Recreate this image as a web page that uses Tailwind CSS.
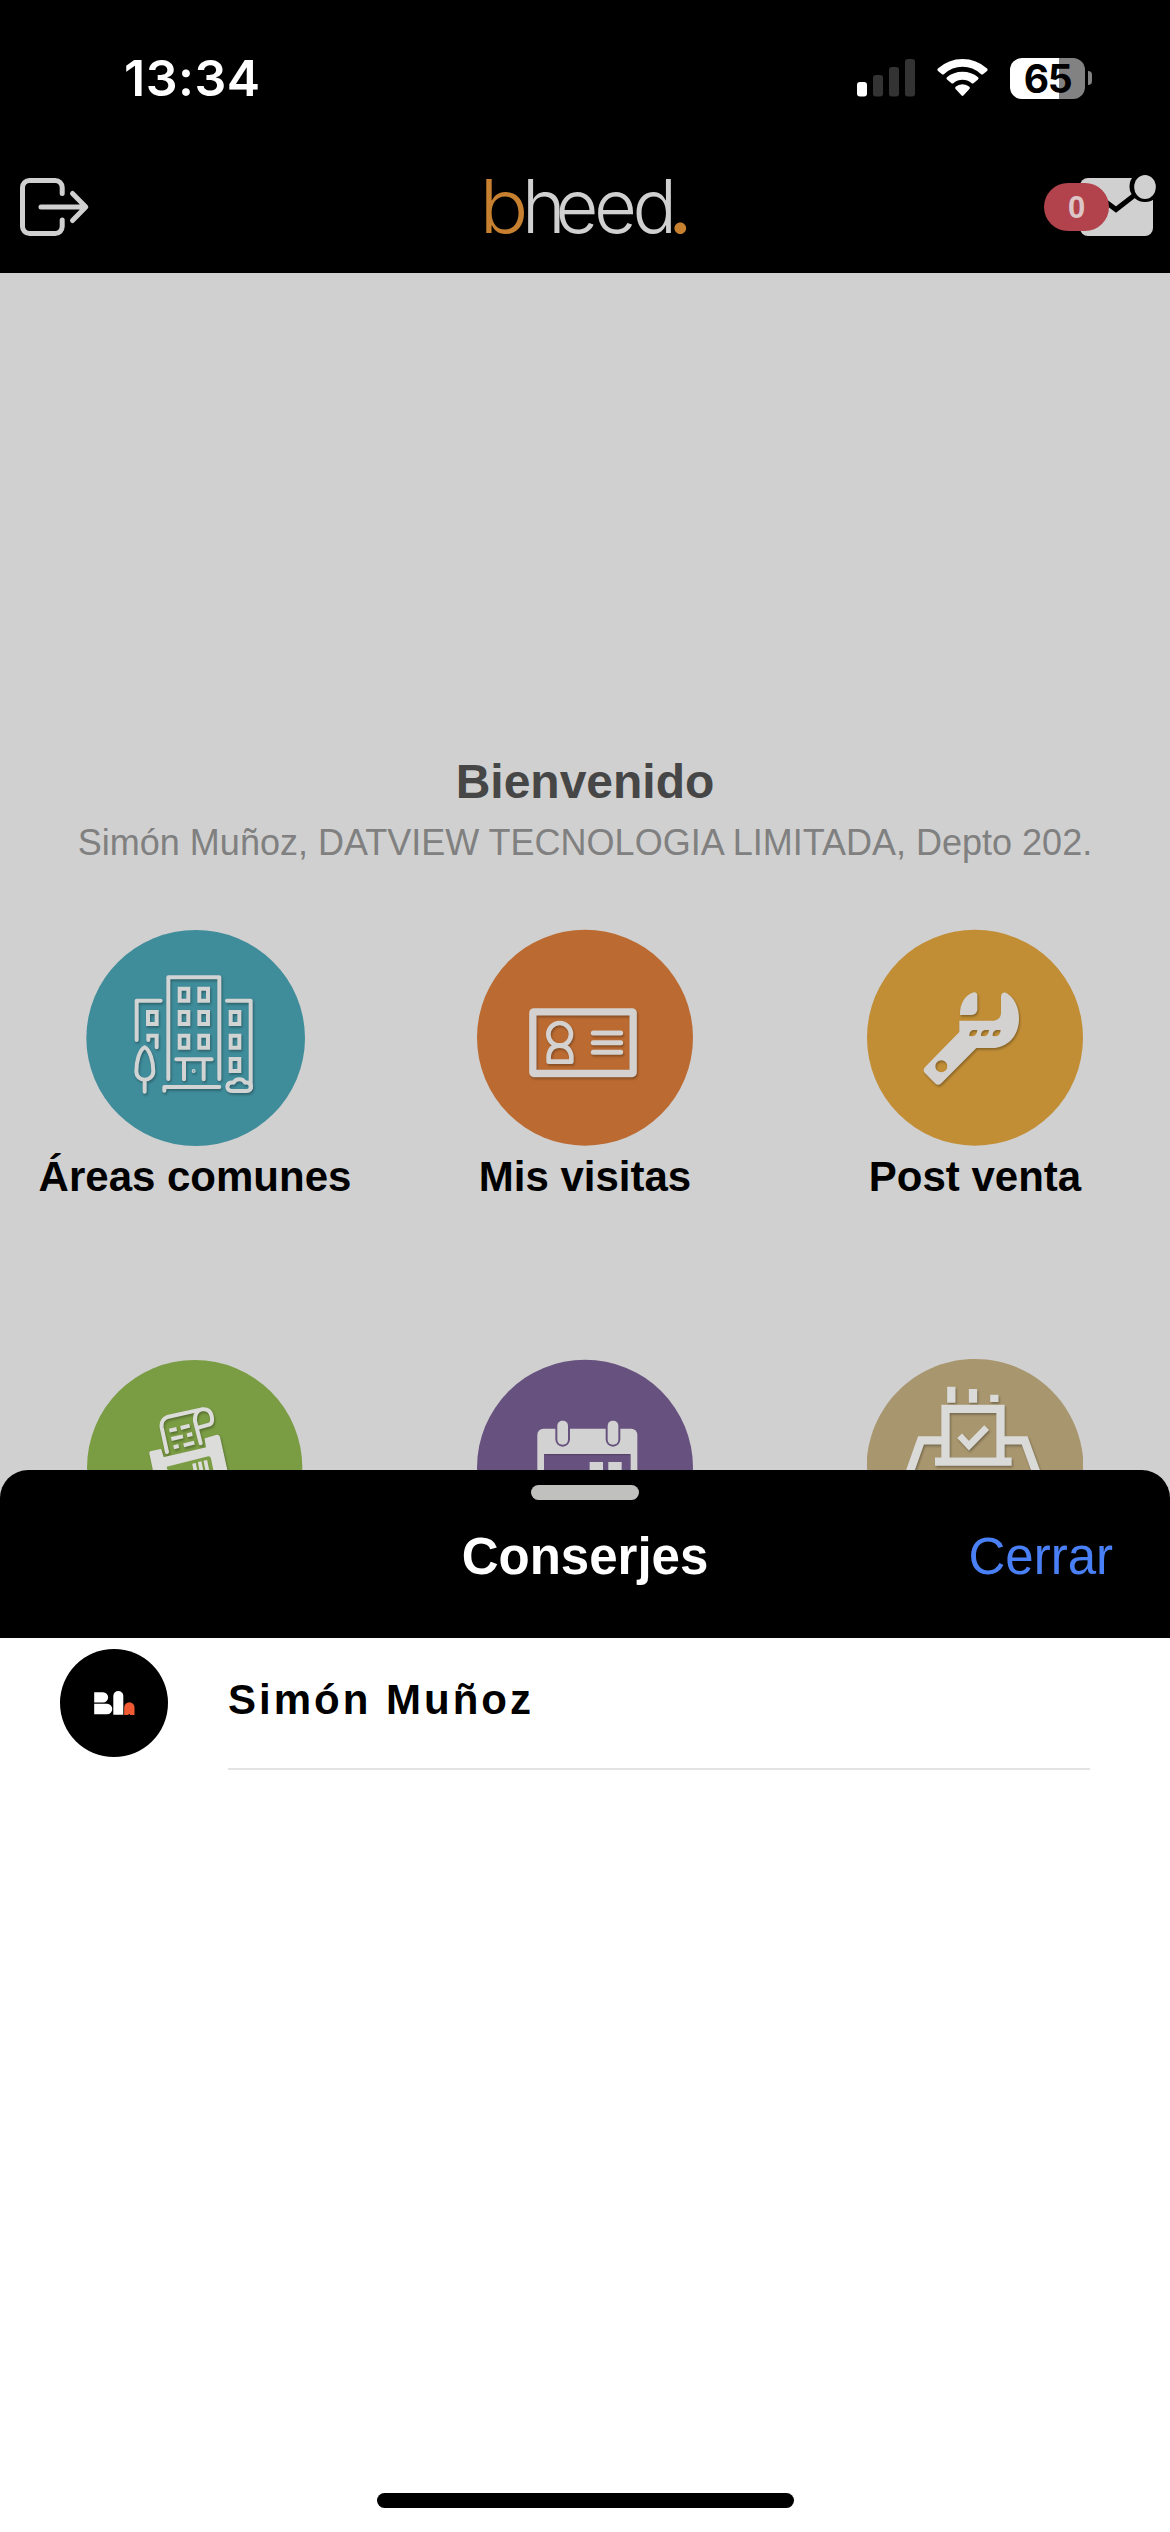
<!DOCTYPE html>
<html lang="es">
<head>
<meta charset="utf-8">
<meta name="viewport" content="width=device-width, initial-scale=1">
<title>bheed</title>
<script src="https://cdn.jsdelivr.net/npm/@tailwindcss/browser@4"></script>
</head>
<body class="bg-white">
<div class="relative h-[2532px] w-[1170px] overflow-hidden bg-[#d0d0d0] font-['Liberation_Sans',Arial,sans-serif]">

  <!-- Status bar and app header -->
  <header class="flex h-[273px] flex-col bg-black">
    <div class="flex h-[156px] items-center justify-between pr-[78px] pl-[124px]">
      <div class="font-['Inter',sans-serif] text-[50px] leading-[60px] font-semibold tracking-[0.5px] text-white">13:34</div>
      <div class="flex items-center">
        <svg class="h-[38px] w-[58px]" viewBox="856 59 58 38">
          <rect x="856" y="82" width="10" height="14.500" rx="3" fill="#fff"/>
          <rect x="872" y="75" width="10" height="21.500" rx="3" fill="#333"/>
          <rect x="888" y="67" width="10" height="29.500" rx="3" fill="#333"/>
          <rect x="904" y="59" width="10" height="37.500" rx="3" fill="#333"/>
        </svg>
        <svg class="ml-[22px] h-[38px] w-[51px]" viewBox="936 59 51 38" fill="#fff">
          <path d="M936.900 68.500Q935.900 69.700 937 71L941 74.200Q942 75 943.200 74Q951 66.800 961.500 66.800T979.800 74Q981 75 982 74.200L986 71Q987.100 69.700 986.100 68.500Q975.500 59 961.500 59T936.900 68.500Z"/>
          <path d="M945.900 77.300Q944.900 78.500 946 79.600L950.500 83.200Q951.500 84 952.600 83Q956.500 79.700 961.500 79.700T970.400 83Q971.500 84 972.500 83.200L977 79.600Q978.100 78.500 977.100 77.300Q970.500 71.800 961.500 71.800T945.900 77.300Z"/>
          <path d="M954.600 86.800Q953.600 88 954.600 89L960.600 95.500Q961.500 96.300 962.400 95.500L968.400 89Q969.400 88 968.400 86.800Q965.500 84.300 961.500 84.300T954.600 86.800Z"/>
        </svg>
        <div class="ml-[22px] flex h-[41px] w-[75px] items-center justify-center rounded-[12px] bg-linear-to-r from-white from-[65.500%] to-[#828282] to-[65.500%] font-['Inter',sans-serif] text-[39px] leading-none font-bold tracking-[-1.500px] text-black">65</div>
        <div class="ml-[3px] h-[14px] w-[4px] rounded-r-full bg-[#828282]"></div>
      </div>
    </div>
    <div class="flex h-[102px] items-center justify-between pr-[14px] pl-[18px]">
      <svg class="h-[62px] w-[114px]" viewBox="18 176 114 62" fill="none" stroke="#d0d0d0" stroke-width="5" stroke-linecap="round" stroke-linejoin="round">
        <path d="M62.200 193.500V187.500a7 7 0 0 0-7-7H29.500a7 7 0 0 0-7 7v39a7 7 0 0 0 7 7H55.200a7 7 0 0 0 7-7V220"/>
        <path d="M41 207H85.500M72.500 193.500L85.800 207L72.500 220.500"/>
      </svg>
      <svg class="h-[66px] w-[206px] overflow-visible font-['Inter',sans-serif] font-light" viewBox="485.500 174 206 66" font-size="74">
        <text x="480" y="232.500" textLength="49" lengthAdjust="spacingAndGlyphs" fill="#c6802f">b</text>
        <text y="232.500" fill="#d0d0d0"><tspan x="522.500 556 594.500 633">heed</tspan><tspan x="669" class="font-semibold" fill="#c6802f">.</tspan></text>
      </svg>
      <div class="flex items-center">
        <div class="z-10 -mr-[29px] flex h-[48px] w-[65px] items-center justify-center rounded-full bg-[#b2434c] text-[31px] leading-none font-bold text-[#dcc6c8]">0</div>
        <svg class="h-[66px] w-[76px]" viewBox="1080 174 76 66">
          <rect x="1080" y="178" width="73" height="58" rx="8" fill="#d0d0d0"/>
          <path d="M1094 193L1116 209.500L1136 194" fill="none" stroke="#000" stroke-width="5"/>
          <circle cx="1145" cy="186.500" r="15.500" fill="#000"/>
          <ellipse cx="1145" cy="187" rx="10.800" ry="12" fill="#d0d0d0"/>
        </svg>
      </div>
    </div>
  </header>

  <!-- Home content -->
  <main class="flex flex-col items-center pt-[479px]">
    <h1 class="text-[48px] leading-[60px] font-bold text-[#464646]">Bienvenido</h1>
    <p class="mt-[6px] text-[36px] leading-[50px] whitespace-nowrap text-[#808080]">Simón Muñoz, DATVIEW TECNOLOGIA LIMITADA, Depto 202.</p>
    <div class="mt-[62px] grid w-full auto-rows-[430px] grid-cols-3 text-center text-[42px] leading-[62px] font-bold text-black">
      <div class="flex flex-col items-center">
        <svg class="h-[216px] w-[270px] overflow-visible" viewBox="0 60 810 648">
          <ellipse cx="407" cy="384" rx="328" ry="324" fill="#3f8c9a"/>
          <g class="drop-shadow-[3px_5px_3px_rgba(0,0,0,0.3)]" fill="none" stroke="#d2d4d4" stroke-width="12" stroke-linecap="round" stroke-linejoin="round">
            <path d="M325 507V202H478V507M230 390V272H302M501 272H572V535"/>
            <path stroke-linejoin="miter" d="M359 236h26v36h-26zM418 236h26v36h-26zM359 306h26v36h-26zM418 306h26v36h-26zM359 377h26v36h-26zM418 377h26v36h-26zM264 306h26v36h-26zM512 306h26v36h-26zM512 377h26v36h-26zM512 447h26v36h-26zM265 390V377H290V412"/>
            <path d="M349 448H455M372 450V508M431 450V508M313 542V531H478"/>
            <path d="M254 412C238 420 229 455 229 484C229 500 241 509 254 509S280 500 280 484C280 455 270 420 254 412ZM254 510V545"/>
            <path d="M516 543Q502 543 502 529Q504 516 521 518Q526 508 538 508T555 518Q571 516 573 529Q573 543 560 543Z"/>
            <circle cx="401" cy="483" r="4" stroke-width="4"/>
          </g>
        </svg>
        <span>Áreas comunes</span>
      </div>
      <div class="flex flex-col items-center">
        <svg class="h-[216px] w-[270px] overflow-visible" viewBox="0 60 810 648">
          <circle cx="405" cy="383" r="324" fill="#bb6b32"/>
          <g class="drop-shadow-[3px_5px_3px_rgba(0,0,0,0.3)]" fill="none" stroke="#d4d2d0" stroke-width="14" stroke-linecap="round" stroke-linejoin="round">
            <rect x="248.500" y="305.500" width="301" height="185" rx="3" stroke-width="22"/>
            <circle cx="329" cy="373" r="34"/>
            <path d="M296 455V438Q300 407 329 407T364 438V455Z"/>
            <path d="M430 369H512M430 398H512M430 427H512" stroke-width="15"/>
          </g>
        </svg>
        <span>Mis visitas</span>
      </div>
      <div class="flex flex-col items-center">
        <svg class="h-[216px] w-[270px] overflow-visible" viewBox="0 60 810 648">
          <circle cx="405" cy="383" r="324" fill="#c18e36"/>
          <path class="drop-shadow-[3px_5px_3px_rgba(0,0,0,0.3)]" fill="#d4d2d0" fill-rule="evenodd" d="M360 315C359 285 372 258 397 248Q412 244 412 258V299Q410 313 395 315ZM358 332H462Q482 330 483 310V260Q484 246 498 248C522 262 537 290 537 326C537 375 505 414 455 414H409L304 520Q294 529 285 520L254 488Q247 480 256 470L358 366ZM286 469a18 18 0 1 0 36 0a18 18 0 1 0 -36 0ZM388 378Q387 364 399 360H412Q411 376 399 379ZM423 378Q422 364 434 360H447Q446 376 434 379ZM458 378Q457 364 469 360H482Q481 376 469 379Z"/>
        </svg>
        <span>Post venta</span>
      </div>
      <div class="flex flex-col items-center">
        <svg class="h-[216px] w-[270px] overflow-visible" viewBox="0 60 810 648">
          <circle cx="404" cy="383" r="323" fill="#7a9c43"/>
          <g class="drop-shadow-[3px_5px_3px_rgba(0,0,0,0.3)]" stroke="#dcdcda" stroke-width="12" stroke-linecap="round" stroke-linejoin="round">
            <path fill="none" d="M321 336L305 262Q302 240 322 231L425 208Q450 205 455 228Q459 248 450 253L415 263M422 310L405 243Q403 213 425 208"/>
            <path stroke-linecap="butt" fill="none" d="M328 272L350 267M362 264L389 257M334 297L369 289M381 286L397 282M341 322L356 318M371 316L403 308"/>
            <path fill="#dcdcda" stroke-width="4" d="M270 340Q269 336 274 335L302 329L310 354L440 324L436 297L468 287Q475 285 478 291L520 480H300Z"/>
          </g>
          <path fill="#7a9c43" d="M320 380L445 349Q452 349 453 356L462 400H325Z"/>
          <path stroke="#dcdcda" stroke-width="11" d="M402 370L407 396M419 365L425 396M436 361L443 396"/>
        </svg>
      </div>
      <div class="flex flex-col items-center">
        <svg class="h-[216px] w-[270px] overflow-visible" viewBox="0 60 810 648">
          <circle cx="405" cy="383" r="324" fill="#67527f"/>
          <rect x="262" y="266" width="300" height="250" rx="18" fill="#d2d2d2"/>
          <rect x="282" y="342" width="260" height="160" fill="#67527f"/>
          <path d="M284 344H540" stroke="#554368" stroke-width="4"/>
          <path d="M316 262h44v36a22 22 0 0 1-44 0ZM467 262h44v36a22 22 0 0 1-44 0Z" fill="#67527f"/>
          <rect x="322" y="242" width="32" height="72" rx="15" fill="#d2d2d2"/>
          <rect x="473" y="242" width="32" height="72" rx="15" fill="#d2d2d2"/>
          <path d="M419 366h40v40h-40ZM475 366h40v40h-40Z" fill="#d2d2d2"/>
        </svg>
      </div>
      <div class="flex flex-col items-center">
        <svg class="h-[216px] w-[270px] overflow-visible" viewBox="0 60 810 648">
          <path d="M81 350C100 180 240 57 405 57S710 180 729 350V420H81Z" fill="#a8966e"/>
          <g class="drop-shadow-[3px_5px_3px_rgba(0,0,0,0.3)]" fill="none" stroke="#dadad8" stroke-width="25">
            <path d="M334 140V188M399 147V188M463 164V186"/>
            <path d="M316.500 355V206.500H481.500V355M285 365H515"/>
            <path d="M306 301H243L208 400M492 301H554L590 400"/>
            <path d="M359 287L387 317L440 263" stroke-width="20"/>
          </g>
        </svg>
      </div>
    </div>
  </main>

  <!-- Bottom sheet -->
  <section class="absolute inset-x-0 top-[1470px] flex h-[1062px] flex-col overflow-hidden rounded-t-[28px] bg-white">
    <div class="flex h-[168px] flex-col items-center bg-black pt-[14.500px]">
      <div class="h-[15px] w-[108px] rounded-full bg-[#c0c0bf]"></div>
      <div class="mt-[27.500px] grid w-full grid-cols-3 text-[51px] leading-[60px]">
        <h2 class="col-start-2 text-center font-bold text-white">Conserjes</h2>
        <button class="pr-[57px] text-right text-[#4a80f5]">Cerrar</button>
      </div>
    </div>
    <ul>
      <li class="flex pt-[11px] pl-[60px]">
        <div class="flex size-[108px] items-center justify-center rounded-full bg-black">
          <svg class="h-[24px] w-[41px]" viewBox="93.500 1691.500 41 24">
            <path fill="#fff" d="M93.700 1692.700H102.500A5 5 0 0 1 102.500 1703H93.700ZM93.700 1704.300H106.500A5.100 5.100 0 0 1 106.500 1714.800H93.700Z"/>
            <path fill="#fff" d="M112.800 1715.300V1696.500A5 5 0 0 1 122.800 1696.500V1715.300Z"/>
            <path fill="#f05a32" d="M123.700 1715.500V1708A5.100 5.100 0 0 1 134 1708V1715.500H129.500V1714.500H128V1715.500Z"/>
          </svg>
        </div>
        <div class="ml-[60px] h-[121px] w-[862px] border-b-2 border-[#e3e3e3] pt-[21px] text-[42px] leading-[60px] font-bold tracking-[3px] text-black">Simón Muñoz</div>
      </li>
    </ul>
    <div class="mx-auto mt-auto mb-[24px] h-[15px] w-[417px] rounded-full bg-black"></div>
  </section>
</div>
</body>
</html>
